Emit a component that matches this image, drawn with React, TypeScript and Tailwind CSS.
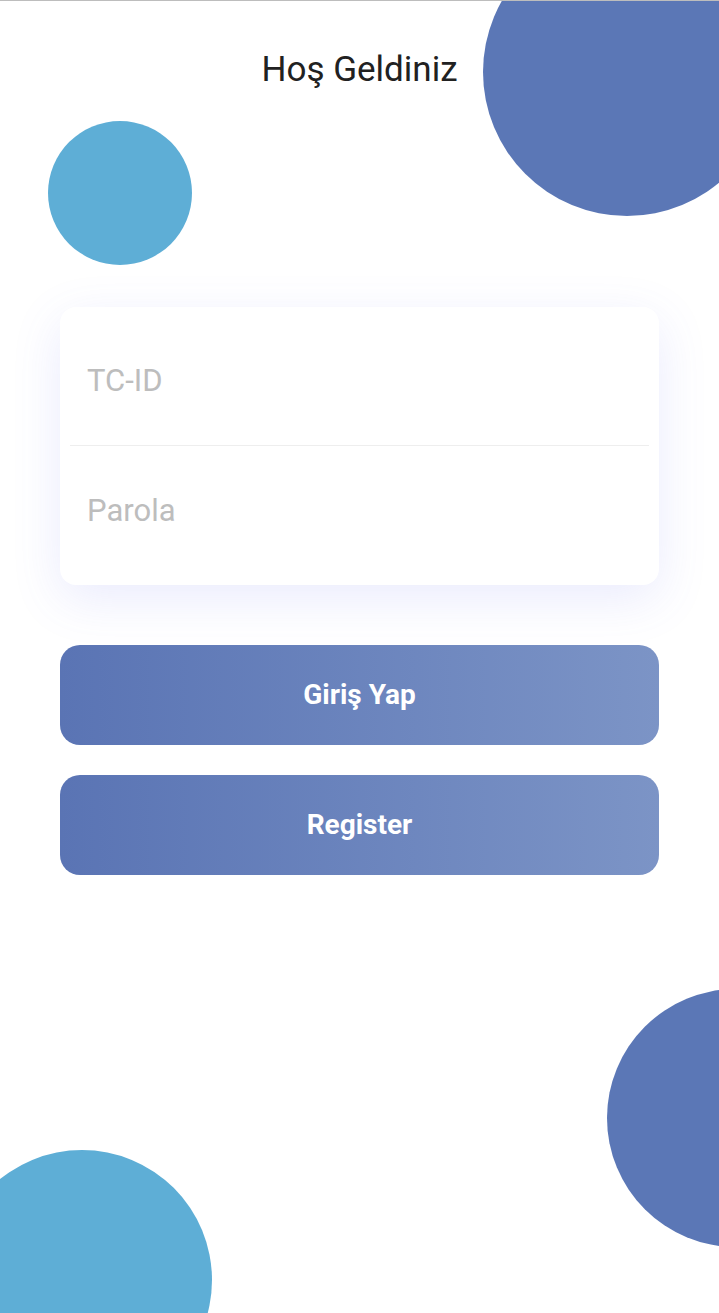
export default function App() {
  return (
    <div className="relative h-[1313px] w-full overflow-hidden bg-white font-['Roboto',sans-serif]">
      <div className="absolute inset-x-0 top-0 z-10 h-px bg-[#bdbdbd]" />

      {/* decorative circles */}
      <div className="absolute left-[483px] top-[-72px] h-[288px] w-[288px] rounded-full bg-[#5b77b6]" />
      <div className="absolute left-[48px] top-[121px] h-[144px] w-[144px] rounded-full bg-[#5eaed6]" />
      <div className="absolute left-[607px] top-[989px] h-[258px] w-[258px] rounded-full bg-[#5b77b6]" />
      <div className="absolute left-[-48px] top-[1150px] h-[260px] w-[260px] rounded-full bg-[#5eaed6]" />

      <div className="relative flex flex-col px-[60px]">
        <h1 className="pt-[50px] text-center text-[35px] leading-[40px] font-normal text-[#212121]">
          Hoş Geldiniz
        </h1>

        <div className="mt-[217px] flex flex-col rounded-[16px] bg-white px-[10px] shadow-[0_14px_50px_rgba(90,100,240,0.13)]">
          <div className="flex h-[139px] items-center border-b border-[#eeeeee] px-[17px] pt-[10px]">
            <input
              placeholder="TC-ID"
              className="w-full bg-transparent text-[31px] text-[#212121] outline-none placeholder:text-[#bdbdbd]"
            />
          </div>
          <div className="flex h-[139px] items-center px-[17px] pb-[8px]">
            <input
              type="password"
              placeholder="Parola"
              className="w-full bg-transparent text-[31px] text-[#212121] outline-none placeholder:text-[#bdbdbd]"
            />
          </div>
        </div>

        <button
          type="button"
          className="mt-[60px] flex h-[100px] items-center justify-center rounded-[20px] bg-gradient-to-r from-[#5a74b4] to-[#7c94c6] text-[28px] font-bold text-white"
        >
          Giriş Yap
        </button>
        <button
          type="button"
          className="mt-[30px] flex h-[100px] items-center justify-center rounded-[20px] bg-gradient-to-r from-[#5a74b4] to-[#7c94c6] text-[28px] font-bold text-white"
        >
          Register
        </button>
      </div>
    </div>
  );
}
